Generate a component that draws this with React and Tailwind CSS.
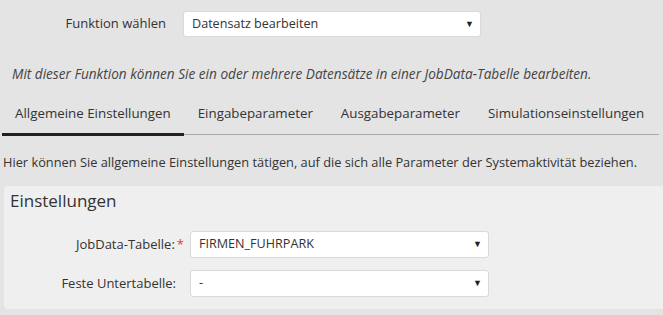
import React from 'react'

function Select({ value, className = '' }) {
  return (
    <div className={`relative flex items-center bg-white border border-[#d9d9d9] rounded-[3px] ${className}`}>
      <span className="pl-[8px] text-[12.6px] text-[#333]">{value}</span>
      <span className="absolute right-[6px] top-1/2 -translate-y-1/2 text-[9px] text-[#222]">▼</span>
    </div>
  )
}

const tabs = ['Allgemeine Einstellungen', 'Eingabeparameter', 'Ausgabeparameter', 'Simulationseinstellungen']

export default function App() {
  return (
    <div className="w-[663px] h-[315px] bg-[#e4e4e4] text-[#333] font-['Open_Sans',sans-serif] overflow-hidden">
      {/* Funktion */}
      <div className="flex items-center pt-[11px]">
        <div className="w-[166px] text-right text-[13px]">Funktion wählen</div>
        <Select value="Datensatz bearbeiten" className="ml-[17px] w-[298px] h-[26px]" />
      </div>

      <p className="mt-[28px] pl-[12px] text-[13.6px] italic text-[#444] leading-[18px]">
        Mit dieser Funktion können Sie ein oder mehrere Datensätze in einer JobData-Tabelle bearbeiten.
      </p>

      {/* Tabs */}
      <div className="mt-[21px] ml-[2px] mr-[4px] flex border-b border-[#a9a9a9]">
        {tabs.map((t, i) => (
          <div
            key={t}
            className={`px-[13px] pb-[9px] text-[13.33px] ${i === 0 ? 'border-b-[3px] border-[#222] -mb-[2px]' : 'mx-[1px]'}`}
          >
            {t}
          </div>
        ))}
      </div>

      <p className="mt-[18px] pl-[3px] text-[12.8px] leading-[18px]">
        Hier können Sie allgemeine Einstellungen tätigen, auf die sich alle Parameter der Systemaktivität beziehen.
      </p>

      {/* Panel */}
      <div className="mt-[15px] ml-[4px] bg-[#efefef] rounded-l-[4px] pb-[12px]">
        <h2 className="pl-[6px] pt-[3px] text-[17px] leading-[23px] text-[#333]">Einstellungen</h2>
        <div className="mt-[19px] flex flex-col gap-[12px]">
          <div className="flex items-center">
            <div className="w-[180px] text-right text-[13px]">
              JobData-Tabelle:<span className="ml-[2px] text-[#e53935]">*</span>
            </div>
            <Select value="FIRMEN_FUHRPARK" className="ml-[6px] w-[299px] h-[27px]" />
          </div>
          <div className="flex items-center">
            <div className="w-[172px] text-right text-[13px]">Feste Untertabelle:</div>
            <Select value="-" className="ml-[14px] w-[299px] h-[27px]" />
          </div>
        </div>
      </div>
    </div>
  )
}
